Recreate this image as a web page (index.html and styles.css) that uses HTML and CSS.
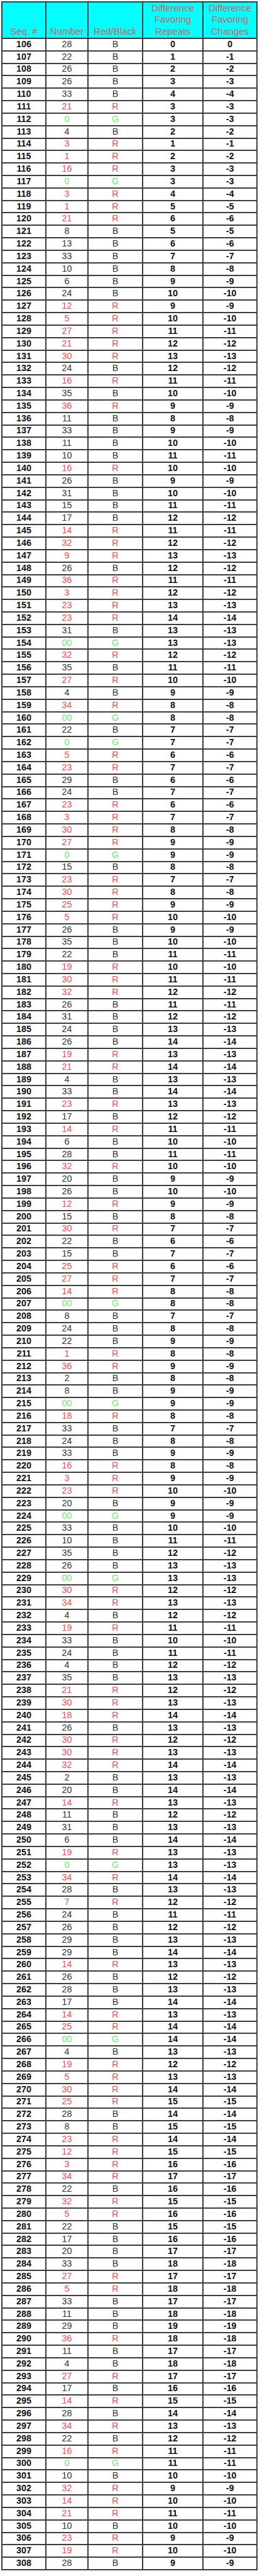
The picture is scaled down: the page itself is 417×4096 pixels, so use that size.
FILE: index.html
```html
<!DOCTYPE html>
<html lang="en">
<head>
<meta charset="utf-8">
<title>Roulette Red/Black Sequence</title>
<link rel="stylesheet" href="styles.css">
</head>
<body>
<table class="sheet">
<colgroup><col class="c-seq"><col class="c-num"><col class="c-rb"><col class="c-rep"><col class="c-chg"></colgroup>
<thead>
<tr class="head"><th>Seq. #</th><th>Number</th><th>Red/Black</th><th>Difference Favoring Repeats</th><th>Difference Favoring Changes</th></tr>
</thead>
<tbody>
<tr><td>106</td><td class="b">28</td><td class="b">B</td><td>0</td><td>0</td></tr>
<tr><td>107</td><td class="b">22</td><td class="b">B</td><td>1</td><td>-1</td></tr>
<tr><td>108</td><td class="b">26</td><td class="b">B</td><td>2</td><td>-2</td></tr>
<tr><td>109</td><td class="b">26</td><td class="b">B</td><td>3</td><td>-3</td></tr>
<tr><td>110</td><td class="b">33</td><td class="b">B</td><td>4</td><td>-4</td></tr>
<tr><td>111</td><td class="r">21</td><td class="r">R</td><td>3</td><td>-3</td></tr>
<tr><td>112</td><td class="g">0</td><td class="g">G</td><td>3</td><td>-3</td></tr>
<tr><td>113</td><td class="b">4</td><td class="b">B</td><td>2</td><td>-2</td></tr>
<tr><td>114</td><td class="r">3</td><td class="r">R</td><td>1</td><td>-1</td></tr>
<tr><td>115</td><td class="r">1</td><td class="r">R</td><td>2</td><td>-2</td></tr>
<tr><td>116</td><td class="r">16</td><td class="r">R</td><td>3</td><td>-3</td></tr>
<tr><td>117</td><td class="g">0</td><td class="g">G</td><td>3</td><td>-3</td></tr>
<tr><td>118</td><td class="r">3</td><td class="r">R</td><td>4</td><td>-4</td></tr>
<tr><td>119</td><td class="r">1</td><td class="r">R</td><td>5</td><td>-5</td></tr>
<tr><td>120</td><td class="r">21</td><td class="r">R</td><td>6</td><td>-6</td></tr>
<tr><td>121</td><td class="b">8</td><td class="b">B</td><td>5</td><td>-5</td></tr>
<tr><td>122</td><td class="b">13</td><td class="b">B</td><td>6</td><td>-6</td></tr>
<tr><td>123</td><td class="b">33</td><td class="b">B</td><td>7</td><td>-7</td></tr>
<tr><td>124</td><td class="b">10</td><td class="b">B</td><td>8</td><td>-8</td></tr>
<tr><td>125</td><td class="b">6</td><td class="b">B</td><td>9</td><td>-9</td></tr>
<tr><td>126</td><td class="b">24</td><td class="b">B</td><td>10</td><td>-10</td></tr>
<tr><td>127</td><td class="r">12</td><td class="r">R</td><td>9</td><td>-9</td></tr>
<tr><td>128</td><td class="r">5</td><td class="r">R</td><td>10</td><td>-10</td></tr>
<tr><td>129</td><td class="r">27</td><td class="r">R</td><td>11</td><td>-11</td></tr>
<tr><td>130</td><td class="r">21</td><td class="r">R</td><td>12</td><td>-12</td></tr>
<tr><td>131</td><td class="r">30</td><td class="r">R</td><td>13</td><td>-13</td></tr>
<tr><td>132</td><td class="b">24</td><td class="b">B</td><td>12</td><td>-12</td></tr>
<tr><td>133</td><td class="r">16</td><td class="r">R</td><td>11</td><td>-11</td></tr>
<tr><td>134</td><td class="b">35</td><td class="b">B</td><td>10</td><td>-10</td></tr>
<tr><td>135</td><td class="r">36</td><td class="r">R</td><td>9</td><td>-9</td></tr>
<tr><td>136</td><td class="b">11</td><td class="b">B</td><td>8</td><td>-8</td></tr>
<tr><td>137</td><td class="b">33</td><td class="b">B</td><td>9</td><td>-9</td></tr>
<tr><td>138</td><td class="b">11</td><td class="b">B</td><td>10</td><td>-10</td></tr>
<tr><td>139</td><td class="b">10</td><td class="b">B</td><td>11</td><td>-11</td></tr>
<tr><td>140</td><td class="r">16</td><td class="r">R</td><td>10</td><td>-10</td></tr>
<tr><td>141</td><td class="b">26</td><td class="b">B</td><td>9</td><td>-9</td></tr>
<tr><td>142</td><td class="b">31</td><td class="b">B</td><td>10</td><td>-10</td></tr>
<tr><td>143</td><td class="b">15</td><td class="b">B</td><td>11</td><td>-11</td></tr>
<tr><td>144</td><td class="b">17</td><td class="b">B</td><td>12</td><td>-12</td></tr>
<tr><td>145</td><td class="r">14</td><td class="r">R</td><td>11</td><td>-11</td></tr>
<tr><td>146</td><td class="r">32</td><td class="r">R</td><td>12</td><td>-12</td></tr>
<tr><td>147</td><td class="r">9</td><td class="r">R</td><td>13</td><td>-13</td></tr>
<tr><td>148</td><td class="b">26</td><td class="b">B</td><td>12</td><td>-12</td></tr>
<tr><td>149</td><td class="r">36</td><td class="r">R</td><td>11</td><td>-11</td></tr>
<tr><td>150</td><td class="r">3</td><td class="r">R</td><td>12</td><td>-12</td></tr>
<tr><td>151</td><td class="r">23</td><td class="r">R</td><td>13</td><td>-13</td></tr>
<tr><td>152</td><td class="r">23</td><td class="r">R</td><td>14</td><td>-14</td></tr>
<tr><td>153</td><td class="b">31</td><td class="b">B</td><td>13</td><td>-13</td></tr>
<tr><td>154</td><td class="g">00</td><td class="g">G</td><td>13</td><td>-13</td></tr>
<tr><td>155</td><td class="r">32</td><td class="r">R</td><td>12</td><td>-12</td></tr>
<tr><td>156</td><td class="b">35</td><td class="b">B</td><td>11</td><td>-11</td></tr>
<tr><td>157</td><td class="r">27</td><td class="r">R</td><td>10</td><td>-10</td></tr>
<tr><td>158</td><td class="b">4</td><td class="b">B</td><td>9</td><td>-9</td></tr>
<tr><td>159</td><td class="r">34</td><td class="r">R</td><td>8</td><td>-8</td></tr>
<tr><td>160</td><td class="g">00</td><td class="g">G</td><td>8</td><td>-8</td></tr>
<tr><td>161</td><td class="b">22</td><td class="b">B</td><td>7</td><td>-7</td></tr>
<tr><td>162</td><td class="g">0</td><td class="g">G</td><td>7</td><td>-7</td></tr>
<tr><td>163</td><td class="r">5</td><td class="r">R</td><td>6</td><td>-6</td></tr>
<tr><td>164</td><td class="r">23</td><td class="r">R</td><td>7</td><td>-7</td></tr>
<tr><td>165</td><td class="b">29</td><td class="b">B</td><td>6</td><td>-6</td></tr>
<tr><td>166</td><td class="b">24</td><td class="b">B</td><td>7</td><td>-7</td></tr>
<tr><td>167</td><td class="r">23</td><td class="r">R</td><td>6</td><td>-6</td></tr>
<tr><td>168</td><td class="r">3</td><td class="r">R</td><td>7</td><td>-7</td></tr>
<tr><td>169</td><td class="r">30</td><td class="r">R</td><td>8</td><td>-8</td></tr>
<tr><td>170</td><td class="r">27</td><td class="r">R</td><td>9</td><td>-9</td></tr>
<tr><td>171</td><td class="g">0</td><td class="g">G</td><td>9</td><td>-9</td></tr>
<tr><td>172</td><td class="b">15</td><td class="b">B</td><td>8</td><td>-8</td></tr>
<tr><td>173</td><td class="r">23</td><td class="r">R</td><td>7</td><td>-7</td></tr>
<tr><td>174</td><td class="r">30</td><td class="r">R</td><td>8</td><td>-8</td></tr>
<tr><td>175</td><td class="r">25</td><td class="r">R</td><td>9</td><td>-9</td></tr>
<tr><td>176</td><td class="r">5</td><td class="r">R</td><td>10</td><td>-10</td></tr>
<tr><td>177</td><td class="b">26</td><td class="b">B</td><td>9</td><td>-9</td></tr>
<tr><td>178</td><td class="b">35</td><td class="b">B</td><td>10</td><td>-10</td></tr>
<tr><td>179</td><td class="b">22</td><td class="b">B</td><td>11</td><td>-11</td></tr>
<tr><td>180</td><td class="r">19</td><td class="r">R</td><td>10</td><td>-10</td></tr>
<tr><td>181</td><td class="r">30</td><td class="r">R</td><td>11</td><td>-11</td></tr>
<tr><td>182</td><td class="r">32</td><td class="r">R</td><td>12</td><td>-12</td></tr>
<tr><td>183</td><td class="b">26</td><td class="b">B</td><td>11</td><td>-11</td></tr>
<tr><td>184</td><td class="b">31</td><td class="b">B</td><td>12</td><td>-12</td></tr>
<tr><td>185</td><td class="b">24</td><td class="b">B</td><td>13</td><td>-13</td></tr>
<tr><td>186</td><td class="b">26</td><td class="b">B</td><td>14</td><td>-14</td></tr>
<tr><td>187</td><td class="r">19</td><td class="r">R</td><td>13</td><td>-13</td></tr>
<tr><td>188</td><td class="r">21</td><td class="r">R</td><td>14</td><td>-14</td></tr>
<tr><td>189</td><td class="b">4</td><td class="b">B</td><td>13</td><td>-13</td></tr>
<tr><td>190</td><td class="b">33</td><td class="b">B</td><td>14</td><td>-14</td></tr>
<tr><td>191</td><td class="r">23</td><td class="r">R</td><td>13</td><td>-13</td></tr>
<tr><td>192</td><td class="b">17</td><td class="b">B</td><td>12</td><td>-12</td></tr>
<tr><td>193</td><td class="r">14</td><td class="r">R</td><td>11</td><td>-11</td></tr>
<tr><td>194</td><td class="b">6</td><td class="b">B</td><td>10</td><td>-10</td></tr>
<tr><td>195</td><td class="b">28</td><td class="b">B</td><td>11</td><td>-11</td></tr>
<tr><td>196</td><td class="r">32</td><td class="r">R</td><td>10</td><td>-10</td></tr>
<tr><td>197</td><td class="b">20</td><td class="b">B</td><td>9</td><td>-9</td></tr>
<tr><td>198</td><td class="b">26</td><td class="b">B</td><td>10</td><td>-10</td></tr>
<tr><td>199</td><td class="r">12</td><td class="r">R</td><td>9</td><td>-9</td></tr>
<tr><td>200</td><td class="b">15</td><td class="b">B</td><td>8</td><td>-8</td></tr>
<tr><td>201</td><td class="r">30</td><td class="r">R</td><td>7</td><td>-7</td></tr>
<tr><td>202</td><td class="b">22</td><td class="b">B</td><td>6</td><td>-6</td></tr>
<tr><td>203</td><td class="b">15</td><td class="b">B</td><td>7</td><td>-7</td></tr>
<tr><td>204</td><td class="r">25</td><td class="r">R</td><td>6</td><td>-6</td></tr>
<tr><td>205</td><td class="r">27</td><td class="r">R</td><td>7</td><td>-7</td></tr>
<tr><td>206</td><td class="r">14</td><td class="r">R</td><td>8</td><td>-8</td></tr>
<tr><td>207</td><td class="g">00</td><td class="g">G</td><td>8</td><td>-8</td></tr>
<tr><td>208</td><td class="b">8</td><td class="b">B</td><td>7</td><td>-7</td></tr>
<tr><td>209</td><td class="b">24</td><td class="b">B</td><td>8</td><td>-8</td></tr>
<tr><td>210</td><td class="b">22</td><td class="b">B</td><td>9</td><td>-9</td></tr>
<tr><td>211</td><td class="r">1</td><td class="r">R</td><td>8</td><td>-8</td></tr>
<tr><td>212</td><td class="r">36</td><td class="r">R</td><td>9</td><td>-9</td></tr>
<tr><td>213</td><td class="b">2</td><td class="b">B</td><td>8</td><td>-8</td></tr>
<tr><td>214</td><td class="b">8</td><td class="b">B</td><td>9</td><td>-9</td></tr>
<tr><td>215</td><td class="g">00</td><td class="g">G</td><td>9</td><td>-9</td></tr>
<tr><td>216</td><td class="r">18</td><td class="r">R</td><td>8</td><td>-8</td></tr>
<tr><td>217</td><td class="b">33</td><td class="b">B</td><td>7</td><td>-7</td></tr>
<tr><td>218</td><td class="b">24</td><td class="b">B</td><td>8</td><td>-8</td></tr>
<tr><td>219</td><td class="b">33</td><td class="b">B</td><td>9</td><td>-9</td></tr>
<tr><td>220</td><td class="r">16</td><td class="r">R</td><td>8</td><td>-8</td></tr>
<tr><td>221</td><td class="r">3</td><td class="r">R</td><td>9</td><td>-9</td></tr>
<tr><td>222</td><td class="r">23</td><td class="r">R</td><td>10</td><td>-10</td></tr>
<tr><td>223</td><td class="b">20</td><td class="b">B</td><td>9</td><td>-9</td></tr>
<tr><td>224</td><td class="g">00</td><td class="g">G</td><td>9</td><td>-9</td></tr>
<tr><td>225</td><td class="b">33</td><td class="b">B</td><td>10</td><td>-10</td></tr>
<tr><td>226</td><td class="b">10</td><td class="b">B</td><td>11</td><td>-11</td></tr>
<tr><td>227</td><td class="b">35</td><td class="b">B</td><td>12</td><td>-12</td></tr>
<tr><td>228</td><td class="b">26</td><td class="b">B</td><td>13</td><td>-13</td></tr>
<tr><td>229</td><td class="g">00</td><td class="g">G</td><td>13</td><td>-13</td></tr>
<tr><td>230</td><td class="r">30</td><td class="r">R</td><td>12</td><td>-12</td></tr>
<tr><td>231</td><td class="r">34</td><td class="r">R</td><td>13</td><td>-13</td></tr>
<tr><td>232</td><td class="b">4</td><td class="b">B</td><td>12</td><td>-12</td></tr>
<tr><td>233</td><td class="r">19</td><td class="r">R</td><td>11</td><td>-11</td></tr>
<tr><td>234</td><td class="b">33</td><td class="b">B</td><td>10</td><td>-10</td></tr>
<tr><td>235</td><td class="b">24</td><td class="b">B</td><td>11</td><td>-11</td></tr>
<tr><td>236</td><td class="b">4</td><td class="b">B</td><td>12</td><td>-12</td></tr>
<tr><td>237</td><td class="b">35</td><td class="b">B</td><td>13</td><td>-13</td></tr>
<tr><td>238</td><td class="r">21</td><td class="r">R</td><td>12</td><td>-12</td></tr>
<tr><td>239</td><td class="r">30</td><td class="r">R</td><td>13</td><td>-13</td></tr>
<tr><td>240</td><td class="r">18</td><td class="r">R</td><td>14</td><td>-14</td></tr>
<tr><td>241</td><td class="b">26</td><td class="b">B</td><td>13</td><td>-13</td></tr>
<tr><td>242</td><td class="r">30</td><td class="r">R</td><td>12</td><td>-12</td></tr>
<tr><td>243</td><td class="r">30</td><td class="r">R</td><td>13</td><td>-13</td></tr>
<tr><td>244</td><td class="r">32</td><td class="r">R</td><td>14</td><td>-14</td></tr>
<tr><td>245</td><td class="b">2</td><td class="b">B</td><td>13</td><td>-13</td></tr>
<tr><td>246</td><td class="b">20</td><td class="b">B</td><td>14</td><td>-14</td></tr>
<tr><td>247</td><td class="r">14</td><td class="r">R</td><td>13</td><td>-13</td></tr>
<tr><td>248</td><td class="b">11</td><td class="b">B</td><td>12</td><td>-12</td></tr>
<tr><td>249</td><td class="b">31</td><td class="b">B</td><td>13</td><td>-13</td></tr>
<tr><td>250</td><td class="b">6</td><td class="b">B</td><td>14</td><td>-14</td></tr>
<tr><td>251</td><td class="r">19</td><td class="r">R</td><td>13</td><td>-13</td></tr>
<tr><td>252</td><td class="g">0</td><td class="g">G</td><td>13</td><td>-13</td></tr>
<tr><td>253</td><td class="r">34</td><td class="r">R</td><td>14</td><td>-14</td></tr>
<tr><td>254</td><td class="b">28</td><td class="b">B</td><td>13</td><td>-13</td></tr>
<tr><td>255</td><td class="r">7</td><td class="r">R</td><td>12</td><td>-12</td></tr>
<tr><td>256</td><td class="b">24</td><td class="b">B</td><td>11</td><td>-11</td></tr>
<tr><td>257</td><td class="b">26</td><td class="b">B</td><td>12</td><td>-12</td></tr>
<tr><td>258</td><td class="b">29</td><td class="b">B</td><td>13</td><td>-13</td></tr>
<tr><td>259</td><td class="b">29</td><td class="b">B</td><td>14</td><td>-14</td></tr>
<tr><td>260</td><td class="r">14</td><td class="r">R</td><td>13</td><td>-13</td></tr>
<tr><td>261</td><td class="b">26</td><td class="b">B</td><td>12</td><td>-12</td></tr>
<tr><td>262</td><td class="b">28</td><td class="b">B</td><td>13</td><td>-13</td></tr>
<tr><td>263</td><td class="b">17</td><td class="b">B</td><td>14</td><td>-14</td></tr>
<tr><td>264</td><td class="r">14</td><td class="r">R</td><td>13</td><td>-13</td></tr>
<tr><td>265</td><td class="r">25</td><td class="r">R</td><td>14</td><td>-14</td></tr>
<tr><td>266</td><td class="g">00</td><td class="g">G</td><td>14</td><td>-14</td></tr>
<tr><td>267</td><td class="b">4</td><td class="b">B</td><td>13</td><td>-13</td></tr>
<tr><td>268</td><td class="r">19</td><td class="r">R</td><td>12</td><td>-12</td></tr>
<tr><td>269</td><td class="r">5</td><td class="r">R</td><td>13</td><td>-13</td></tr>
<tr><td>270</td><td class="r">30</td><td class="r">R</td><td>14</td><td>-14</td></tr>
<tr><td>271</td><td class="r">25</td><td class="r">R</td><td>15</td><td>-15</td></tr>
<tr><td>272</td><td class="b">28</td><td class="b">B</td><td>14</td><td>-14</td></tr>
<tr><td>273</td><td class="b">8</td><td class="b">B</td><td>15</td><td>-15</td></tr>
<tr><td>274</td><td class="r">23</td><td class="r">R</td><td>14</td><td>-14</td></tr>
<tr><td>275</td><td class="r">12</td><td class="r">R</td><td>15</td><td>-15</td></tr>
<tr><td>276</td><td class="r">3</td><td class="r">R</td><td>16</td><td>-16</td></tr>
<tr><td>277</td><td class="r">34</td><td class="r">R</td><td>17</td><td>-17</td></tr>
<tr><td>278</td><td class="b">22</td><td class="b">B</td><td>16</td><td>-16</td></tr>
<tr><td>279</td><td class="r">32</td><td class="r">R</td><td>15</td><td>-15</td></tr>
<tr><td>280</td><td class="r">5</td><td class="r">R</td><td>16</td><td>-16</td></tr>
<tr><td>281</td><td class="b">22</td><td class="b">B</td><td>15</td><td>-15</td></tr>
<tr><td>282</td><td class="b">17</td><td class="b">B</td><td>16</td><td>-16</td></tr>
<tr><td>283</td><td class="b">20</td><td class="b">B</td><td>17</td><td>-17</td></tr>
<tr><td>284</td><td class="b">33</td><td class="b">B</td><td>18</td><td>-18</td></tr>
<tr><td>285</td><td class="r">27</td><td class="r">R</td><td>17</td><td>-17</td></tr>
<tr><td>286</td><td class="r">5</td><td class="r">R</td><td>18</td><td>-18</td></tr>
<tr><td>287</td><td class="b">33</td><td class="b">B</td><td>17</td><td>-17</td></tr>
<tr><td>288</td><td class="b">11</td><td class="b">B</td><td>18</td><td>-18</td></tr>
<tr><td>289</td><td class="b">29</td><td class="b">B</td><td>19</td><td>-19</td></tr>
<tr><td>290</td><td class="r">36</td><td class="r">R</td><td>18</td><td>-18</td></tr>
<tr><td>291</td><td class="b">11</td><td class="b">B</td><td>17</td><td>-17</td></tr>
<tr><td>292</td><td class="b">4</td><td class="b">B</td><td>18</td><td>-18</td></tr>
<tr><td>293</td><td class="r">27</td><td class="r">R</td><td>17</td><td>-17</td></tr>
<tr><td>294</td><td class="b">17</td><td class="b">B</td><td>16</td><td>-16</td></tr>
<tr><td>295</td><td class="r">14</td><td class="r">R</td><td>15</td><td>-15</td></tr>
<tr><td>296</td><td class="b">28</td><td class="b">B</td><td>14</td><td>-14</td></tr>
<tr><td>297</td><td class="r">34</td><td class="r">R</td><td>13</td><td>-13</td></tr>
<tr><td>298</td><td class="b">22</td><td class="b">B</td><td>12</td><td>-12</td></tr>
<tr><td>299</td><td class="r">16</td><td class="r">R</td><td>11</td><td>-11</td></tr>
<tr><td>300</td><td class="g">0</td><td class="g">G</td><td>11</td><td>-11</td></tr>
<tr><td>301</td><td class="b">10</td><td class="b">B</td><td>10</td><td>-10</td></tr>
<tr><td>302</td><td class="r">32</td><td class="r">R</td><td>9</td><td>-9</td></tr>
<tr><td>303</td><td class="r">14</td><td class="r">R</td><td>10</td><td>-10</td></tr>
<tr><td>304</td><td class="r">21</td><td class="r">R</td><td>11</td><td>-11</td></tr>
<tr><td>305</td><td class="b">10</td><td class="b">B</td><td>10</td><td>-10</td></tr>
<tr><td>306</td><td class="r">23</td><td class="r">R</td><td>9</td><td>-9</td></tr>
<tr><td>307</td><td class="r">19</td><td class="r">R</td><td>10</td><td>-10</td></tr>
<tr><td>308</td><td class="b">28</td><td class="b">B</td><td>9</td><td>-9</td></tr>
</tbody>
</table>
</body>
</html>
```

FILE: styles.css
```css
html, body {
  margin: 0;
  padding: 0;
  background: #ffffff;
}
body {
  padding: 2px 0 0 2px;
  font-family: "Liberation Sans", Arial, sans-serif;
}
.sheet {
  border-collapse: collapse;
  table-layout: fixed;
  width: 406px;
  border: 2px solid #3c3c3c;
}
.c-seq { width: 70px; }
.c-num { width: 67px; }
.c-rb { width: 87px; }
.c-rep { width: 96px; }
.c-chg { width: 86px; }

.sheet th,
.sheet td {
  border: 2px solid #3c3c3c;
  padding: 0;
  text-align: center;
}
.head {
  height: 55px;
  background: #00ffff;
}
.sheet th {
  font-weight: normal;
  font-size: 15px;
  line-height: 18.3px;
  color: #e05555;
  vertical-align: bottom;
  padding: 0 2px 1px;
}
.sheet tbody tr {
  height: 19.84px;
}
.sheet td {
  font-size: 14.3px;
  line-height: 15px;
  color: #111111;
  font-weight: bold;
  vertical-align: middle;
  padding-bottom: 1px;
}
.sheet td.b,
.sheet td.r,
.sheet td.g {
  font-weight: normal;
}
.sheet td.b { color: #333333; }
.sheet td.r { color: #ff4a4a; }
.sheet td.g { color: #6fe86f; }
```
